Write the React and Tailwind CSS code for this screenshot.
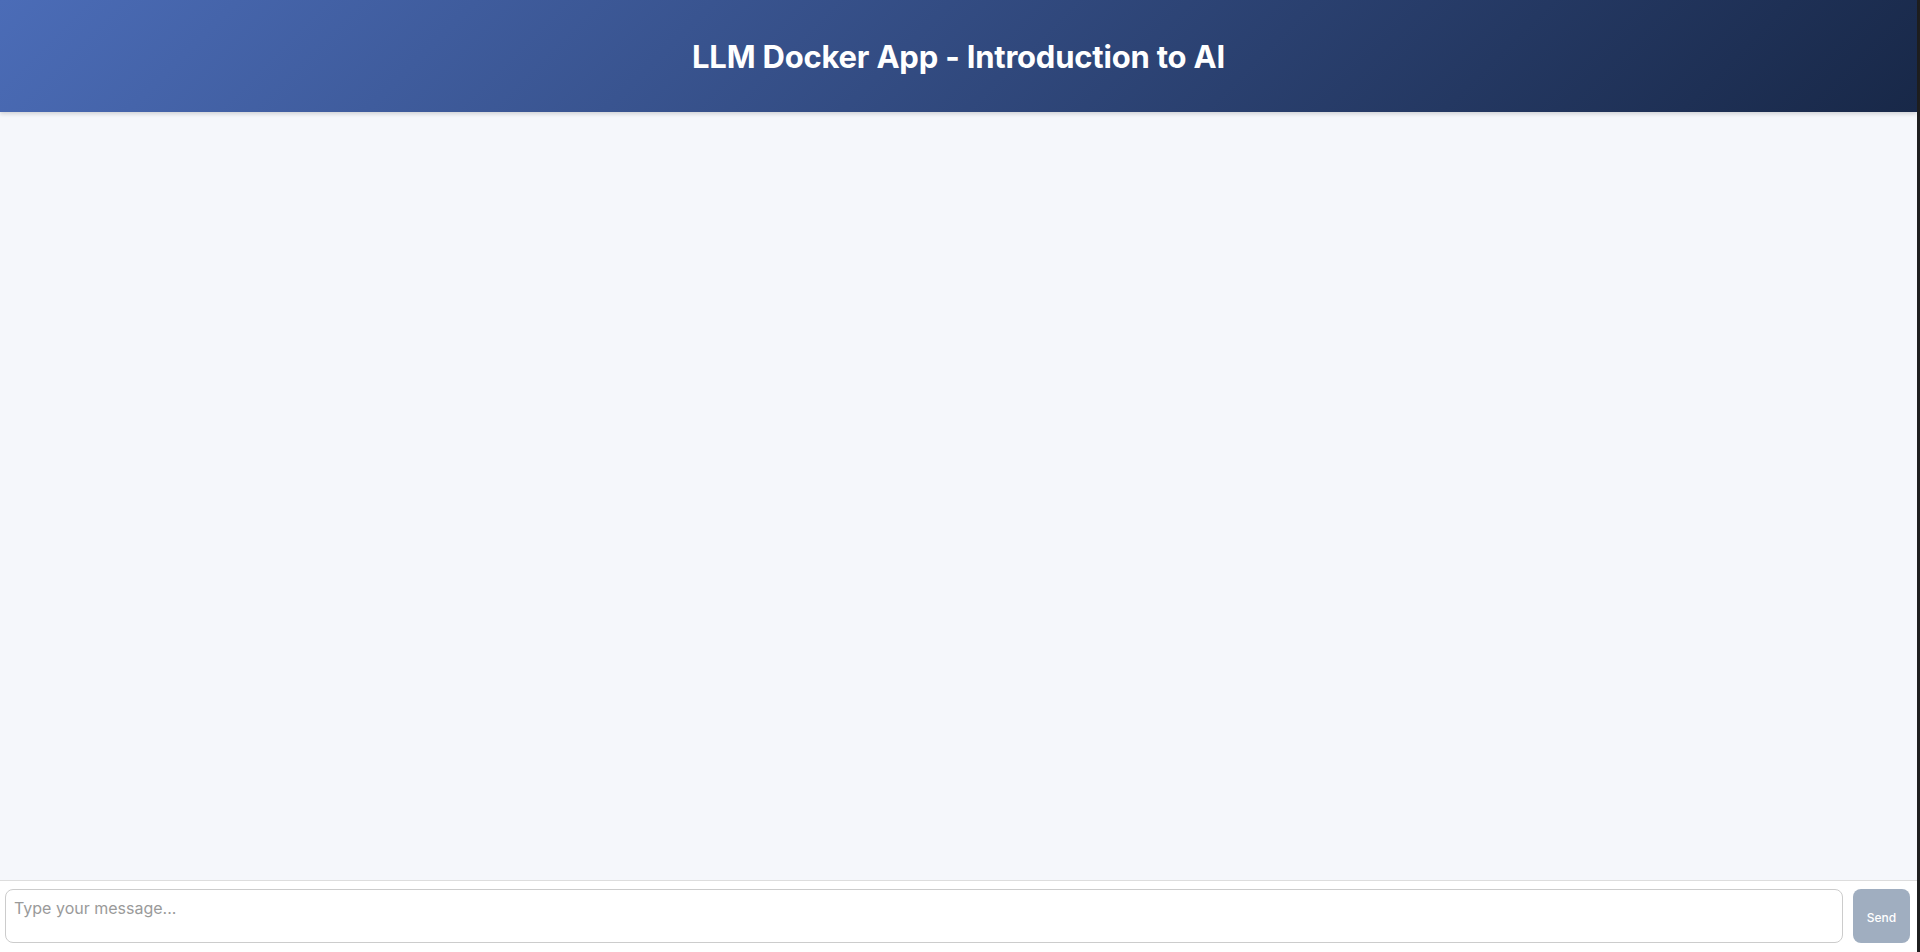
export default function App() {
    return (
        <div className="h-screen flex flex-col bg-[#f5f7fb] border-r-[3px] border-[#1f1f1f] font-['Inter','Noto_Sans',sans-serif]">
            <header className="h-[112px] shrink-0 flex items-center justify-center bg-[linear-gradient(135deg,#4b6cb7,#182848)] shadow-[0_2px_4px_rgba(0,0,0,0.15)]">
                <h1 className="text-[31px] font-bold text-white tracking-[-0.2px] pt-[2px]">LLM Docker App - Introduction to AI</h1>
            </header>
            <main className="flex-1 overflow-y-auto"></main>
            <div className="shrink-0 flex gap-[10px] items-stretch bg-white border-t border-[#dddddd] pl-[5px] pr-[7px] pt-2 pb-[9px]">
                <textarea
                    className="flex-1 h-[54px] resize-none rounded-lg border border-[#cccccc] px-[8px] py-[6px] text-[16px] text-[#333] placeholder:text-[#9a9a9a] outline-none"
                    placeholder="Type your message..."
                />
                <button className="w-[57px] rounded-lg bg-[#a0aec0] text-white text-[12px] font-medium pt-[3px]">Send</button>
            </div>
        </div>
    )
}
